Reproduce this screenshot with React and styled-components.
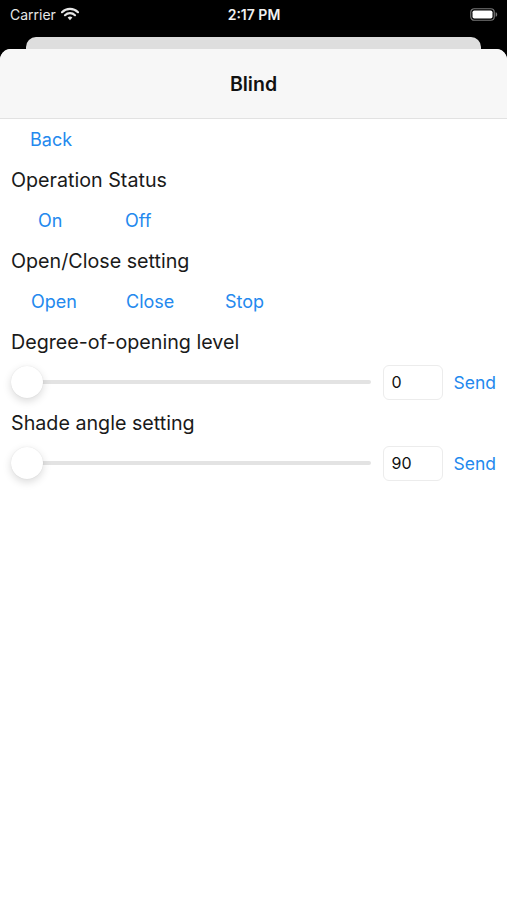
import React from "react";
import styled, { createGlobalStyle } from "styled-components";

const GlobalStyle = createGlobalStyle`
  html, body {
    margin: 0;
    padding: 0;
    background: #000;
  }
  body {
    font-family: Inter, "Liberation Sans", Arial, sans-serif;
  }
`;

const Screen = styled.div`
  width: 507px;
  height: 900px;
  background: #000;
  display: flex;
  flex-direction: column;
  overflow: hidden;
`;

const StatusBar = styled.div`
  height: 28px;
  display: grid;
  grid-template-columns: 1fr auto 1fr;
  align-items: center;
  padding: 0 9px 0 10px;
  color: #e6e6e6;
  font-size: 14px;
`;

const Carrier = styled.div`
  display: flex;
  align-items: center;
  gap: 5px;
`;

const Clock = styled.div`
  font-weight: 600;
  color: #f0f0f0;
`;

const BatteryWrap = styled.div`
  display: flex;
  justify-content: flex-end;
`;

const BackSheet = styled.div`
  margin: 9px 26px 0;
  height: 14px;
  background: #dedede;
  border-radius: 10px 10px 0 0;
`;

const Sheet = styled.div`
  flex: 1;
  margin-top: -2px;
  background: #fff;
  border-radius: 11px 11px 0 0;
  overflow: hidden;
`;

const Header = styled.div`
  height: 69px;
  background: #f7f7f7;
  border-bottom: 1px solid #e2e2e2;
  display: flex;
  align-items: center;
  justify-content: center;
  font-size: 19.5px;
  font-weight: 600;
  color: #111;
`;

const Body = styled.div`
  padding: 0 11px 0;
  display: flex;
  flex-direction: column;
`;

const Row = styled.div`
  height: 40.5px;
  display: flex;
  align-items: center;
`;

const Label = styled.div`
  font-size: 19.7px;
  color: #1a1a1a;
`;

const LinkButton = styled.button`
  border: none;
  background: none;
  padding: 0;
  font-family: inherit;
  font-size: 18px;
  color: #2489ee;
  width: ${p => p.w || "auto"};
  margin-left: ${p => p.ml || "0"};
  text-align: left;
  cursor: pointer;
`;

const SliderTrack = styled.div`
  position: relative;
  flex: 1;
  height: 4px;
  margin-left: 16px;
  margin-right: 12px;
  background: #e3e3e3;
  border-radius: 2px;
`;

const Thumb = styled.div`
  position: absolute;
  left: -16px;
  top: 50%;
  width: 32px;
  height: 32px;
  margin-top: -16px;
  border-radius: 50%;
  background: #fff;
  box-shadow: 0 3px 8px rgba(0, 0, 0, 0.15), 0 0 1px rgba(0, 0, 0, 0.12);
`;

const ValueBox = styled.div`
  width: 60px;
  height: 35px;
  box-sizing: border-box;
  border: 1px solid #ececec;
  border-radius: 6px;
  display: flex;
  align-items: center;
  padding-left: 8px;
  font-size: 16px;
  color: #111;
`;

const SendButton = styled(LinkButton)`
  margin-left: 11px;
  font-size: 17.5px;
`;

const Wifi = () => (
  <svg width="18" height="14" viewBox="0 0 18 14">
    <path d="M1 5.2a11.5 11.5 0 0 1 16 0" stroke="#e6e6e6" strokeWidth="2.2" fill="none" strokeLinecap="round" />
    <path d="M4 8.2a7.2 7.2 0 0 1 10 0" stroke="#e6e6e6" strokeWidth="2.2" fill="none" strokeLinecap="round" />
    <path d="M9 13.2l-2.4-2.6a3.4 3.4 0 0 1 4.8 0z" fill="#e6e6e6" />
  </svg>
);

const Battery = () => (
  <svg width="28" height="13" viewBox="0 0 28 13">
    <rect x="0.75" y="0.75" width="23.5" height="11.5" rx="3.5" fill="none" stroke="#777" strokeWidth="1.2" />
    <rect x="2.5" y="2.5" width="20" height="8" rx="1.8" fill="#fff" />
    <path d="M25.6 4.3c1.1.3 1.6 1.1 1.6 2.2s-.5 1.9-1.6 2.2z" fill="#777" />
  </svg>
);

const SliderRow = ({ value }) => (
  <Row>
    <SliderTrack>
      <Thumb />
    </SliderTrack>
    <ValueBox>{value}</ValueBox>
    <SendButton>Send</SendButton>
  </Row>
);

export default function App() {
  return (
    <Screen>
      <GlobalStyle />
      <StatusBar>
        <Carrier>
          Carrier <Wifi />
        </Carrier>
        <Clock>2:17 PM</Clock>
        <BatteryWrap>
          <Battery />
        </BatteryWrap>
      </StatusBar>
      <BackSheet />
      <Sheet>
        <Header>Blind</Header>
        <Body>
          <Row>
            <LinkButton ml="19px">Back</LinkButton>
          </Row>
          <Row>
            <Label>Operation Status</Label>
          </Row>
          <Row>
            <LinkButton w="87px" ml="27px">On</LinkButton>
            <LinkButton>Off</LinkButton>
          </Row>
          <Row>
            <Label>Open/Close setting</Label>
          </Row>
          <Row>
            <LinkButton w="95px" ml="20px">Open</LinkButton>
            <LinkButton w="99px">Close</LinkButton>
            <LinkButton>Stop</LinkButton>
          </Row>
          <Row>
            <Label>Degree-of-opening level</Label>
          </Row>
          <SliderRow value="0" />
          <Row>
            <Label>Shade angle setting</Label>
          </Row>
          <SliderRow value="90" />
        </Body>
      </Sheet>
    </Screen>
  );
}
